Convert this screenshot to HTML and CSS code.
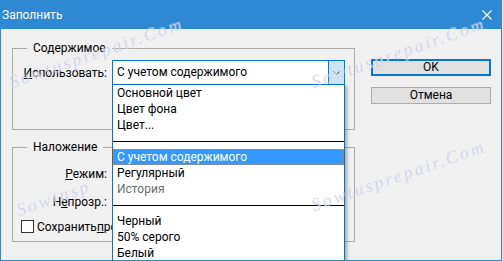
FILE: index.html
```html
<!DOCTYPE html>
<html lang="ru">

<head>
    <meta charset="UTF-8">
    <meta name="viewport" content="width=device-width, initial-scale=1.0">
    <title>Заполнить</title>
    <link rel="stylesheet" href="styles.css">
</head>

<body>
    <div class="window">
        <div class="titlebar">
            <span class="title">Заполнить</span>
            <svg class="close" width="10" height="10" viewBox="0 0 10 10">
                <path d="M0.5 0.5 L9.5 9.5 M9.5 0.5 L0.5 9.5" stroke="#fff" stroke-width="1.1" fill="none"/>
            </svg>
        </div>

        <div class="content">
            <div class="groups">
                <fieldset class="group group-contents">
                    <legend>Содержимое</legend>
                    <div class="row">
                        <label class="field-label"><u>И</u>спользовать:</label>
                        <div class="select">
                            <span class="select-value">С учетом содержимого</span>
                            <span class="select-btn">
                                <svg width="7" height="4" viewBox="0 0 7 4">
                                    <path d="M0.5 0.5 L3.5 3.5 L6.5 0.5" stroke="#333" stroke-width="1" fill="none"/>
                                </svg>
                            </span>
                        </div>
                    </div>
                </fieldset>

                <fieldset class="group group-blend">
                    <legend>Наложение</legend>
                    <div class="row">
                        <label class="field-label"><u>Р</u>ежим:</label>
                    </div>
                    <div class="row">
                        <label class="field-label">Н<u>е</u>прозр.:</label>
                    </div>
                    <label class="check"><span class="check-box"></span>Сохранить <u>п</u>розрачность</label>
                </fieldset>
            </div>

            <div class="buttons">
                <button type="button" class="btn btn-default">OK</button>
                <button type="button" class="btn">Отмена</button>
            </div>
        </div>

        <!-- open list of the "Использовать" select -->
        <ul class="dropdown">
            <li>Основной цвет</li>
            <li>Цвет фона</li>
            <li>Цвет...</li>
            <li class="sep"></li>
            <li class="selected">С учетом содержимого</li>
            <li>Регулярный</li>
            <li class="disabled">История</li>
            <li class="sep"></li>
            <li>Черный</li>
            <li>50% серого</li>
            <li>Белый</li>
        </ul>

        <div class="watermarks">
            <span class="mark mark-a">Sowtusprepair.Com</span>
            <span class="mark mark-b">Sowtusprepair.Com</span>
            <span class="mark mark-c">Sowtusprepair.Com</span>
            <span class="mark mark-d">Sowtusp</span>
        </div>
    </div>
</body>

</html>
```

FILE: styles.css
```css
/* Photoshop "Fill" dialog, Windows 10 look */
body {
    margin: 0;
    background: #e8e8e8;
    font-family: Roboto, "Noto Sans", sans-serif;
    font-size: 12px;
    color: #000;
}

.window {
    position: relative;
    width: 502px;
    height: 261px;
    box-sizing: border-box;
    border: 1px solid #2d89d3;
    background: #f0f0f0;
    overflow: hidden;
}

.titlebar {
    display: flex;
    align-items: center;
    justify-content: space-between;
    height: 28px;
    padding-left: 1px;
    background: #2d89d3;
    color: #fff;
}

.close {
    margin-right: 9px;
}

.content {
    display: flex;
    padding-top: 11px;
}

.groups {
    margin-left: 11px;
}

.group {
    width: 343px;
    box-sizing: border-box;
    margin: 0;
    padding: 4px 8px 44px 8px;
    border: 1px solid #adadad;
    min-width: 0;
}

.group legend {
    margin-left: 6px;
    padding: 0 6px;
    line-height: 16px;
}

.group-blend {
    margin-top: 9px;
    padding-top: 6px;
    padding-bottom: 8px;
}

.row {
    display: flex;
    align-items: center;
    height: 25px;
}

.row + .row {
    margin-top: 3px;
}

.field-label {
    width: 86px;
    margin-right: 5px;
    text-align: right;
}

.select {
    display: flex;
    width: 233px;
    height: 25px;
    box-sizing: border-box;
    border: 1px solid #0078d7;
    background: #fff;
}

.select-value {
    flex: 1;
    padding-left: 4px;
    line-height: 23px;
}

.select-btn {
    display: flex;
    align-items: center;
    justify-content: center;
    width: 15px;
    border-left: 1px solid #0078d7;
    background: #cce4f7;
}

/* the open list covers the rest of this label */
.check {
    display: flex;
    align-items: center;
    width: 91px;
    height: 13px;
    margin-top: 6px;
    white-space: nowrap;
    overflow: hidden;
}

.check-box {
    flex: none;
    width: 13px;
    height: 13px;
    box-sizing: border-box;
    margin-right: 3px;
    border: 1px solid #333;
    background: #fff;
}

.buttons {
    display: flex;
    flex-direction: column;
    gap: 11px;
    margin-left: 16px;
    padding-top: 19px;
}

.btn {
    width: 120px;
    height: 17px;
    padding: 0;
    border: 1px solid #adadad;
    background: #e1e1e1;
    font-family: inherit;
    font-size: 12px;
    line-height: 13px;
    color: #000;
}

.btn-default {
    border: 2px solid #0078d7;
}

.dropdown {
    position: absolute;
    left: 111px;
    top: 84px;
    z-index: 2;
    width: 233px;
    height: 180px;
    box-sizing: border-box;
    margin: 0;
    padding: 0;
    list-style: none;
    background: #fff;
    border-left: 1px solid #0078d7;
    border-right: 1px solid #0078d7;
    box-shadow: 3px 0 3px -1px rgba(0, 0, 0, 0.3);
}

.dropdown li {
    height: 16px;
    padding-left: 4px;
    line-height: 16px;
}

.dropdown .sep {
    position: relative;
    padding: 0;
}

.dropdown .sep::after {
    content: "";
    position: absolute;
    left: 0;
    right: 0;
    top: 8px;
    border-top: 1px solid #000;
}

.dropdown .selected {
    background: #3399ff;
    color: #fff;
    outline: 1px dotted #c88434;
    outline-offset: -1px;
}

.dropdown .disabled {
    color: #6d6d6d;
}

/* site watermark over the whole screenshot */
.watermarks {
    position: absolute;
    inset: 0;
    z-index: 3;
    pointer-events: none;
}

.mark {
    position: absolute;
    font-family: "Liberation Serif", serif;
    font-style: italic;
    font-size: 18px;
    line-height: 20px;
    letter-spacing: 2.5px;
    white-space: nowrap;
    color: rgba(175, 180, 222, 0.55);
    text-shadow: 0 0 1px rgba(255, 255, 255, 0.8);
    transform: rotate(-19deg);
    transform-origin: left bottom;
}

.mark-a {
    left: 12px;
    top: 71px;
}

.mark-b {
    left: 314px;
    top: 71px;
}

.mark-c {
    left: 314px;
    top: 194px;
}

.mark-d {
    left: 19px;
    top: 199px;
}
```
